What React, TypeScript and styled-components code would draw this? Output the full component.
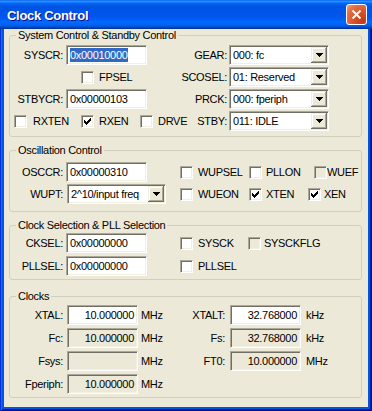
import styled, { createGlobalStyle } from "styled-components";

const GlobalStyle = createGlobalStyle`
  html, body {
    margin: 0;
    padding: 0;
    background: #ece9d8;
  }
  body {
    font-family: "Liberation Sans", Arial, sans-serif;
    font-size: 11px;
    letter-spacing: -0.3px;
    color: #000;
  }
`;

const Window = styled.div`
  width: 372px;
  height: 411px;
  box-sizing: border-box;
  display: flex;
  flex-direction: column;
  background: #0055e5;
  box-shadow: inset 1px 0 #0831d9, inset -1px 0 #00138c, inset 0 -1px #00138c,
    inset 2px 0 #166aee, inset -2px 0 #001ea0, inset 0 -2px #001ea0;
`;

const TitleBar = styled.div`
  height: 29px;
  flex: none;
  display: flex;
  align-items: center;
  justify-content: space-between;
  padding: 0 5px 0 7px;
  background: linear-gradient(
    180deg,
    #0058ee 0%,
    #3593ff 4%,
    #288eff 6%,
    #127dff 8%,
    #036ffc 10%,
    #0262ee 14%,
    #0057e5 20%,
    #0054e3 24%,
    #0055eb 56%,
    #005bf5 66%,
    #026afe 76%,
    #0062ef 86%,
    #0052d6 92%,
    #0040ab 96%,
    #003092 100%
  );
`;

const Title = styled.span`
  font-family: "Liberation Sans", Arial, sans-serif;
  font-weight: bold;
  font-size: 13px;
  letter-spacing: -0.3px;
  color: #fff;
  text-shadow: 1px 1px #0f1089;
  padding-top: 1px;
`;

const CloseButton = styled.div`
  width: 21px;
  height: 21px;
  box-sizing: border-box;
  border: 1px solid #fff;
  border-radius: 3px;
  display: flex;
  align-items: center;
  justify-content: center;
  background: radial-gradient(circle at 85% 85%, #c13a14 0%, #d9552b 45%, #e4714a 75%, #f0a286 100%);
`;

const Body = styled.div`
  flex: 1;
  margin: 0 4px 4px;
  padding: 0 6px 0 5px;
  background: #ece9d8;
  display: flex;
  flex-direction: column;
`;

const Group = styled.fieldset<{ $mt: number; $pt: number; $pb: number }>`
  margin: ${(p) => p.$mt}px 0 0;
  padding: ${(p) => p.$pt}px 0 ${(p) => p.$pb}px;
  border: 1px solid #d0d0bf;
  border-radius: 3px;
  min-width: 0;
`;

const Legend = styled.legend`
  margin-left: 6px;
  padding: 0 2px;
  line-height: 13px;
  font-size: 11px;
`;

const Grid = styled.div<{ $cols: string; $row: number; $gap?: number }>`
  display: grid;
  grid-template-columns: ${(p) => p.$cols};
  grid-auto-rows: ${(p) => p.$row}px;
  row-gap: ${(p) => p.$gap ?? 0}px;
  align-items: center;
`;

const Label = styled.span<{ $pr: number }>`
  text-align: right;
  padding-right: ${(p) => p.$pr}px;
  white-space: nowrap;
`;

const Unit = styled.span<{ $pl: number }>`
  padding-left: ${(p) => p.$pl}px;
  white-space: nowrap;
`;

const sunken = `
  box-sizing: border-box;
  border: 1px solid;
  border-color: #aca899 #fff #fff #aca899;
  box-shadow: inset 1px 1px #716f64, inset -1px -1px #f1efe2;
`;

const Edit = styled.div<{ $w: number; $ro?: boolean; $right?: boolean }>`
  ${sunken}
  width: ${(p) => p.$w}px;
  height: 20px;
  padding: 0 3px;
  line-height: 18px;
  background: ${(p) => (p.$ro ? "#ece9d8" : "#fff")};
  text-align: ${(p) => (p.$right ? "right" : "left")};
  white-space: nowrap;
  overflow: hidden;
`;

const Selected = styled.span`
  background: #316ac5;
  color: #fff;
  display: inline-block;
  line-height: 14px;
`;

const Combo = styled.div<{ $w: number; $ml?: number }>`
  ${sunken}
  width: ${(p) => p.$w}px;
  height: 20px;
  margin-left: ${(p) => p.$ml ?? 0}px;
  background: #fff;
  display: flex;
  align-items: center;
  justify-content: space-between;
  padding: 1px 1px 1px 3px;
  white-space: nowrap;
`;

const ComboButton = styled.div`
  width: 16px;
  height: 16px;
  box-sizing: border-box;
  flex: none;
  background: #ece9d8;
  box-shadow: inset -1px -1px #716f64, inset 1px 1px #f1efe2, inset -2px -2px #aca899,
    inset 2px 2px #fff;
  display: flex;
  align-items: center;
  justify-content: center;
`;

const CheckRow = styled.div<{ $col?: string; $pl?: number }>`
  grid-column: ${(p) => p.$col ?? "auto"};
  padding-left: ${(p) => p.$pl ?? 0}px;
  display: flex;
  align-items: center;
  white-space: nowrap;
`;

const CheckItem = styled.div<{ $w?: number; $gap: number }>`
  flex: none;
  width: ${(p) => (p.$w ? `${p.$w}px` : "auto")};
  display: flex;
  align-items: center;
  gap: ${(p) => p.$gap}px;
`;

const Box = styled.span<{ $disabled?: boolean }>`
  ${sunken}
  width: 13px;
  height: 13px;
  flex: none;
  display: flex;
  align-items: center;
  justify-content: center;
  background: ${(p) => (p.$disabled ? "#ece9d8" : "#fff")};
`;

const CheckMark = () => (
  <svg width="7" height="7" viewBox="0 0 7 7" shapeRendering="crispEdges">
    <path
      fill="#000"
      d="M6 0h1v1h-1z M5 1h2v1h-2z M0 2h1v1h-1z M4 2h3v1h-3z M0 3h2v1h-2z M3 3h3v1h-3z M0 4h5v1h-5z M1 5h3v1h-3z M2 6h1v1h-1z"
    />
  </svg>
);

const Arrow = () => (
  <svg width="7" height="4" viewBox="0 0 7 4" shapeRendering="crispEdges">
    <path fill="#000" d="M0 0h7v1h-7z M1 1h5v1h-5z M2 2h3v1h-3z M3 3h1v1h-1z" />
  </svg>
);

type CheckProps = {
  label: string;
  w?: number;
  gap?: number;
  checked?: boolean;
  disabled?: boolean;
};

const Check = ({ label, w, gap = 5, checked, disabled }: CheckProps) => (
  <CheckItem $w={w} $gap={gap}>
    <Box $disabled={disabled}>{checked && <CheckMark />}</Box>
    <span>{label}</span>
  </CheckItem>
);

const Select = ({ value, w, ml }: { value: string; w: number; ml?: number }) => (
  <Combo $w={w} $ml={ml}>
    <span>{value}</span>
    <ComboButton>
      <Arrow />
    </ComboButton>
  </Combo>
);

const App = () => {
  return (
    <Window>
      <GlobalStyle />
      <TitleBar>
        <Title>Clock Control</Title>
        <CloseButton>
          <svg width="11" height="11" viewBox="0 0 11 11">
            <path d="M1.5 1.5l8 8M9.5 1.5l-8 8" stroke="#fff" strokeWidth="2" />
          </svg>
        </CloseButton>
      </TitleBar>
      <Body>
        <Group $mt={0} $pt={2} $pb={4}>
          <Legend>System Control &amp; Standby Control</Legend>
          <Grid $cols="56px 81px 82px 100px" $row={22}>
            <Label $pr={3}>SYSCR:</Label>
            <Edit $w={81}>
              <Selected>0x00010000</Selected>
            </Edit>
            <Label $pr={2}>GEAR:</Label>
            <Select value="000: fc" w={100} />

            <CheckRow $col="1 / 3" $pl={71}>
              <Check label="FPSEL" />
            </CheckRow>
            <Label $pr={2}>SCOSEL:</Label>
            <Select value="01: Reserved" w={100} />

            <Label $pr={3}>STBYCR:</Label>
            <Edit $w={81}>0x00000103</Edit>
            <Label $pr={2}>PRCK:</Label>
            <Select value="000: fperiph" w={100} />

            <CheckRow $col="1 / 3" $pl={4}>
              <Check label="RXTEN" w={67} gap={6} />
              <Check label="RXEN" w={59} checked />
              <Check label="DRVE" />
            </CheckRow>
            <Label $pr={2}>STBY:</Label>
            <Select value="011: IDLE" w={100} />
          </Grid>
        </Group>

        <Group $mt={7} $pt={4} $pb={6}>
          <Legend>Oscillation Control</Legend>
          <Grid $cols="56px 114px 1fr" $row={22}>
            <Label $pr={3}>OSCCR:</Label>
            <Edit $w={81}>0x00000310</Edit>
            <CheckRow>
              <Check label="WUPSEL" w={69} />
              <Check label="PLLON" w={65} gap={4} />
              <Check label="WUEF" gap={0} disabled />
            </CheckRow>

            <Label $pr={3}>WUPT:</Label>
            <Select value="2^10/input freq" w={99} ml={1} />
            <CheckRow>
              <Check label="WUEON" w={69} />
              <Check label="XTEN" w={59} gap={4} checked />
              <Check label="XEN" gap={3} checked />
            </CheckRow>
          </Grid>
        </Group>

        <Group $mt={7} $pt={0} $pb={2}>
          <Legend>Clock Selection &amp; PLL Selection</Legend>
          <Grid $cols="56px 114px 1fr" $row={22} $gap={1}>
            <Label $pr={3}>CKSEL:</Label>
            <Edit $w={81}>0x00000000</Edit>
            <CheckRow>
              <Check label="SYSCK" w={68} />
              <Check label="SYSCKFLG" gap={3} disabled />
            </CheckRow>

            <Label $pr={3}>PLLSEL:</Label>
            <Edit $w={81}>0x00000000</Edit>
            <CheckRow>
              <Check label="PLLSEL" />
            </CheckRow>
          </Grid>
        </Group>

        <Group $mt={10} $pt={0} $pb={2}>
          <Legend>Clocks</Legend>
          <Grid $cols="57px 71px 40px 52px 71px 1fr" $row={23}>
            <Label $pr={4}>XTAL:</Label>
            <Edit $w={71} $right>10.000000</Edit>
            <Unit $pl={3}>MHz</Unit>
            <Label $pr={5}>XTALT:</Label>
            <Edit $w={71} $right>32.768000</Edit>
            <Unit $pl={5}>kHz</Unit>

            <Label $pr={4}>Fc:</Label>
            <Edit $w={71} $ro $right>10.000000</Edit>
            <Unit $pl={3}>MHz</Unit>
            <Label $pr={5}>Fs:</Label>
            <Edit $w={71} $ro $right>32.768000</Edit>
            <Unit $pl={5}>kHz</Unit>

            <Label $pr={4}>Fsys:</Label>
            <Edit $w={71} $ro $right />
            <Unit $pl={3}>MHz</Unit>
            <Label $pr={5}>FT0:</Label>
            <Edit $w={71} $ro $right>10.000000</Edit>
            <Unit $pl={5}>MHz</Unit>

            <Label $pr={4}>Fperiph:</Label>
            <Edit $w={71} $ro $right>10.000000</Edit>
            <Unit $pl={3}>MHz</Unit>
          </Grid>
        </Group>
      </Body>
    </Window>
  );
};

export default App;
